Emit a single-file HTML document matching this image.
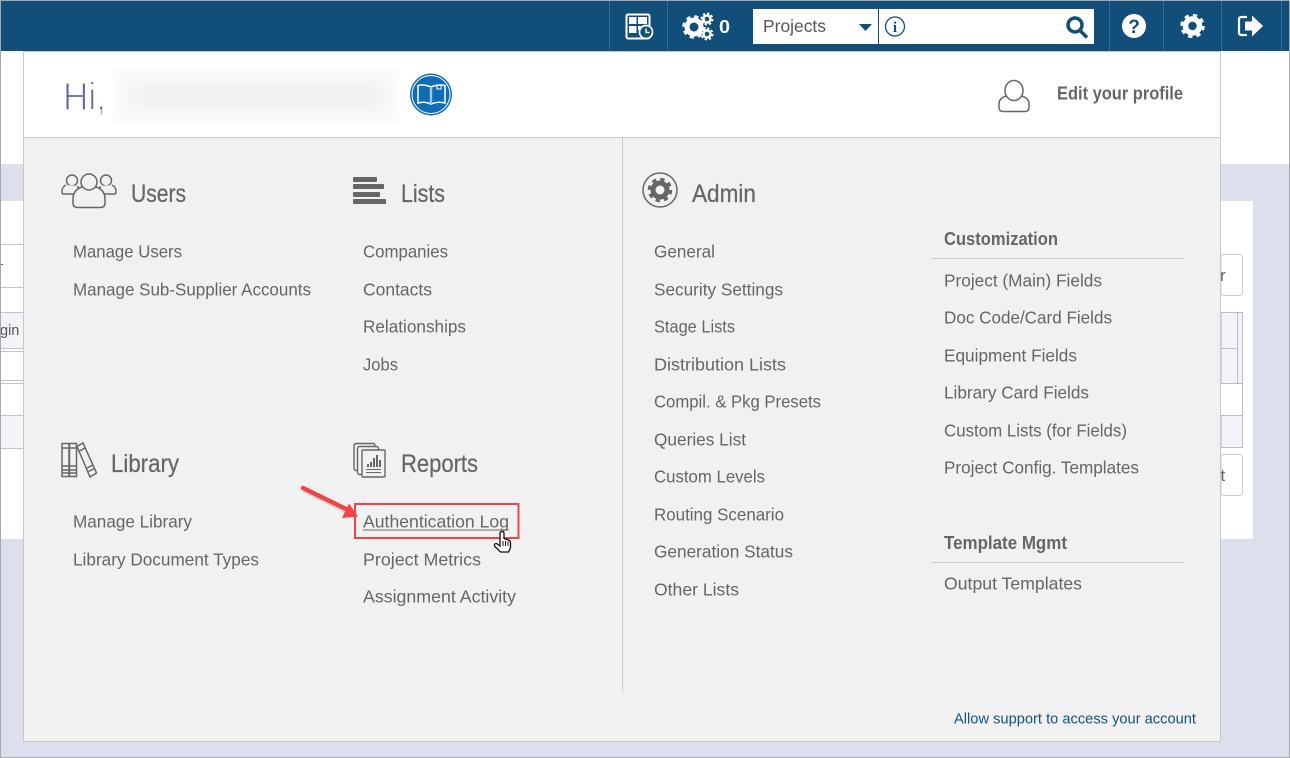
<!DOCTYPE html>
<html lang="en"><head><meta charset="utf-8"><title>Admin menu</title>
<style>
html,body{margin:0;padding:0;background:#dbe0ec}
svg{display:block;position:absolute;left:0;top:0}
text{font-family:"Liberation Sans",Arial,sans-serif;fill:#666}
.i{font-size:17.500px}
.h{font-size:25px;stroke:#666;stroke-width:.25px}
.b{font-size:18px;font-weight:bold}
</style></head><body>
<svg width="1290" height="758" viewBox="0 0 1290 758" xmlns="http://www.w3.org/2000/svg">
<!-- background page -->
<rect width="1290" height="758" fill="#dbe0ec"/>
<rect y="51" width="1290" height="113" fill="#fff"/>
<rect y="201" width="1253" height="338" fill="#fff"/>
<!-- left table fragments -->
<g fill="none" stroke="#c4c4ca" stroke-width="1">
<path d="M0 244.500H23M0 287.500H23M0 312.500H23M0 348.500H23M0 351.500H23M0 380.500H23M0 383.500H23M0 415.500H23M0 448.500H23"/>
</g>
<rect y="313" width="23" height="35" fill="#f1f3f9"/>
<rect y="416" width="23" height="32" fill="#f1f3f9"/>
<rect x="1" y="264" width="2" height="1" fill="#666"/>
<text x="0" y="335" font-size="14.500" style="fill:#555">gin</text>
<!-- right fragments -->
<rect x="1221" y="254.500" width="21.500" height="41" rx="3" fill="#fff" stroke="#ccc"/>
<text x="1220" y="281" font-size="17" style="fill:#666">r</text>
<rect x="1221" y="312.500" width="21.500" height="135" fill="#f1f3f9" stroke="#bcbcc8"/>
<rect x="1221" y="383" width="21" height="32" fill="#fff"/>
<path d="M1221 348.500H1237.500M1237.500 313V383M1221 383.500H1242M1221 415.500H1242" stroke="#bcbcc8" fill="none"/>
<rect x="1221" y="454.500" width="21.500" height="41" rx="3" fill="#fff" stroke="#ccc"/>
<text x="1220.500" y="481" font-size="17" style="fill:#666">t</text>
<!-- nav -->
<rect width="1290" height="51" fill="#114e7a"/>
<rect width="1290" height="1" fill="#a8a8a8"/>
<g stroke="#356d94" stroke-width="1">
<path d="M609.500 1V51M667.500 1V51M1109.500 1V51M1163.500 1V51M1221.500 1V51M1281.500 1V51"/>
</g>
<!-- calendar clock icon -->
<g>
<rect x="626.500" y="14.500" width="23" height="24" rx="1.500" fill="none" stroke="#fff" stroke-width="2"/>
<rect x="629" y="17" width="7.500" height="7" fill="#fff"/><rect x="638" y="17" width="9" height="7" fill="#fff"/>
<rect x="629" y="26" width="7.500" height="7" fill="#fff"/><rect x="638" y="26" width="5" height="4" fill="#fff"/>
<circle cx="646" cy="32" r="6.500" fill="#114e7a" stroke="#fff" stroke-width="1.700"/>
<path d="M646 28.500V32.500H649.500" fill="none" stroke="#fff" stroke-width="1.400"/>
</g>
<!-- gears -->
<g fill="none" stroke="#fff">
<circle cx="694" cy="27" r="7" stroke-width="5"/>
<circle cx="694" cy="27" r="10" stroke-width="3.500" stroke-dasharray="4 3.850"/>
<circle cx="707" cy="19" r="3.500" stroke-width="2.500"/>
<circle cx="707" cy="19" r="5.500" stroke-width="2" stroke-dasharray="2.300 2"/>
<circle cx="707" cy="34" r="3.500" stroke-width="2.500"/>
<circle cx="707" cy="34" r="5.500" stroke-width="2" stroke-dasharray="2.300 2"/>
</g>
<text x="719" y="33" class="b" textLength="11" lengthAdjust="spacingAndGlyphs" style="fill:#fff">0</text>
<!-- search box -->
<rect x="753" y="9" width="341" height="35" fill="#fff"/>
<rect x="878" y="9" width="1" height="35" fill="#114e7a"/>
<text x="763" y="32" class="i" textLength="63" lengthAdjust="spacingAndGlyphs" style="fill:#555">Projects</text>
<path d="M859 24H872L865.500 31Z" fill="#114e7a"/>
<circle cx="895" cy="26.500" r="9.500" fill="none" stroke="#114e7a" stroke-width="1.300"/>
<text x="895" y="32" font-size="15" text-anchor="middle" font-weight="bold" style="font-family:'Liberation Serif',serif;fill:#114e7a">i</text>
<circle cx="1075" cy="25" r="7" fill="none" stroke="#114e7a" stroke-width="3.500"/>
<path d="M1080 30.500L1087 37.500" stroke="#114e7a" stroke-width="3.500" fill="none"/>
<!-- help -->
<circle cx="1134" cy="26" r="12" fill="#fff"/>
<text x="1134" y="33" font-size="19" font-weight="bold" text-anchor="middle" style="fill:#114e7a">?</text>
<!-- settings -->
<g fill="none" stroke="#fff">
<circle cx="1192.500" cy="26" r="7" stroke-width="5.500"/>
<circle cx="1192.500" cy="26" r="10.500" stroke-width="3.500" stroke-dasharray="4.200 4.050"/>
</g>
<!-- logout -->
<path d="M1247 17H1241.500Q1239 17 1239 19.500V32.500Q1239 35 1241.500 35H1247" fill="none" stroke="#fff" stroke-width="2.200"/>
<path d="M1245 21.500H1252V15.500L1263 26L1252 36.500V30.500H1245Z" fill="#fff"/>
<!-- panel -->
<rect x="23.500" y="51.500" width="1197" height="690" fill="#f1f1f1" stroke="#c8c8c8"/>
<rect x="24" y="51" width="1196" height="86" fill="#fff"/>
<rect x="24" y="137" width="1196" height="1" fill="#c9c9c9"/>
<rect x="622" y="138" width="1" height="553" fill="#c9c9c9"/>
<rect y="51" x="23" width="1198" height="1" fill="#c8c8c8"/>
<!-- hi -->
<text x="63" y="110" font-size="39" textLength="43" lengthAdjust="spacingAndGlyphs" style="fill:#5f63a0;stroke:#fff;stroke-width:1.300px;paint-order:normal">Hi,</text>
<defs>
<filter id="bl" x="-10%" y="-60%" width="120%" height="220%"><feGaussianBlur stdDeviation="9"/></filter>
<clipPath id="nm"><rect x="113" y="68" width="286" height="56"/></clipPath>
</defs>
<rect x="113" y="68" width="286" height="56" fill="#fbfbfb"/>
<g clip-path="url(#nm)"><rect x="128" y="85" width="258" height="22" fill="#eeeeee" filter="url(#bl)"/></g>
<!-- book badge -->
<circle cx="431" cy="94.500" r="21" fill="#0f6cb6"/>
<circle cx="431" cy="94.500" r="19" fill="none" stroke="#fff" stroke-width="1"/>
<path d="M418 85.500Q424 84 431 87Q438 84 445 85.500V103Q438 101 431 104Q424 101 418 103Z" fill="none" stroke="#fff" stroke-width="1.500"/>
<path d="M431 87V104" stroke="#9fc6e6" stroke-width="2.500"/>
<path d="M437 85H441V89H437Z" fill="none" stroke="#fff"/>
<!-- profile -->
<g fill="none" stroke="#666" stroke-width="1.500">
<ellipse cx="1014" cy="90.500" rx="9" ry="10"/>
<path d="M1006.500 96Q999 98 999 104V107Q999 111.500 1003 111.500H1025Q1029 111.500 1029 107V104Q1029 98 1021.500 96"/>
</g>
<text x="1057" y="99.500" class="b" textLength="126" lengthAdjust="spacingAndGlyphs">Edit your profile</text>
<!-- users icon -->
<g fill="#f1f1f1" stroke="#666" stroke-width="1.500">
<circle cx="72" cy="180.500" r="5.500"/>
<path d="M66 185Q62 187 62 191V192Q62 194 64 194H78V186"/>
<circle cx="106" cy="180.500" r="5.500"/>
<path d="M112 185Q116 187 116 191V192Q116 194 114 194H100V186"/>
<path d="M82 187Q73 190 73 199V203Q73 207.500 78 207.500H100Q105 207.500 105 203V199Q105 190 96 187Z"/>
<circle cx="89" cy="182" r="8"/>
</g>
<text x="131" y="202" class="h" textLength="55" lengthAdjust="spacingAndGlyphs">Users</text>
<!-- lists icon -->
<g fill="#666">
<rect x="353" y="177" width="24" height="5" rx="1"/><rect x="353" y="184" width="31" height="5" rx="1"/>
<rect x="353" y="192" width="27" height="5" rx="1"/><rect x="353" y="199" width="33" height="5" rx="1"/>
</g>
<text x="401" y="202" class="h" textLength="44" lengthAdjust="spacingAndGlyphs">Lists</text>
<!-- admin icon -->
<circle cx="660" cy="190" r="17" fill="none" stroke="#666" stroke-width="1.500"/>
<g fill="none" stroke="#666">
<circle cx="660" cy="190" r="7" stroke-width="5"/>
<circle cx="660" cy="190" r="10.500" stroke-width="3.500" stroke-dasharray="4.200 4.050"/>
</g>
<text x="692" y="202" class="h" textLength="64" lengthAdjust="spacingAndGlyphs">Admin</text>
<!-- library icon -->
<g fill="none" stroke="#666" stroke-width="1.500">
<rect x="62" y="443.500" width="7" height="33"/><rect x="69.500" y="443.500" width="7" height="33"/>
<path d="M62.500 448H76M62.500 466H76M62.500 470H76M62.500 473H76"/>
<path d="M77 446.500L83 443L96.500 473L90 477Z"/>
<path d="M79.500 451L85 448M87 468L93 465M88.500 471.500L94.500 468.500"/>
</g>
<text x="111" y="472" class="h" textLength="68" lengthAdjust="spacingAndGlyphs">Library</text>
<!-- reports icon -->
<g fill="#f1f1f1" stroke="#666" stroke-width="1.400">
<rect x="354" y="443.500" width="21" height="27" rx="2"/>
<rect x="357.500" y="446.500" width="21" height="28" rx="2"/>
<rect x="362" y="450" width="23" height="27" rx="1"/>
</g>
<g fill="#666">
<rect x="367" y="464" width="2" height="3"/><rect x="370" y="462" width="2" height="5"/><rect x="373" y="458" width="2" height="9"/><rect x="376" y="455" width="2" height="12"/><rect x="379" y="460" width="2" height="7"/>
<rect x="366" y="469" width="15" height="1"/><rect x="366" y="472" width="15" height="1"/>
</g>
<text x="401" y="472" class="h" textLength="77" lengthAdjust="spacingAndGlyphs">Reports</text>
<!-- column 1 -->
<g transform="translate(0 -.5)">
<text class="i" x="73" y="258" textLength="109" lengthAdjust="spacingAndGlyphs">Manage Users</text>
<text class="i" x="73" y="296" textLength="238" lengthAdjust="spacingAndGlyphs">Manage Sub-Supplier Accounts</text>
<text class="i" x="363" y="258" textLength="85" lengthAdjust="spacingAndGlyphs">Companies</text>
<text class="i" x="363" y="296" textLength="69" lengthAdjust="spacingAndGlyphs">Contacts</text>
<text class="i" x="363" y="333" textLength="103" lengthAdjust="spacingAndGlyphs">Relationships</text>
<text class="i" x="363" y="371" textLength="35" lengthAdjust="spacingAndGlyphs">Jobs</text>
<text class="i" x="73" y="528" textLength="119" lengthAdjust="spacingAndGlyphs">Manage Library</text>
<text class="i" x="73" y="566" textLength="186" lengthAdjust="spacingAndGlyphs">Library Document Types</text>
<text class="i" x="363" y="528" textLength="146" lengthAdjust="spacingAndGlyphs">Authentication Log</text>
<rect x="363" y="530" width="146" height="1" fill="#666"/>
<text class="i" x="363" y="566" textLength="118" lengthAdjust="spacingAndGlyphs">Project Metrics</text>
<text class="i" x="363" y="603" textLength="153" lengthAdjust="spacingAndGlyphs">Assignment Activity</text>
<!-- admin col -->
<text class="i" x="654" y="258" textLength="61" lengthAdjust="spacingAndGlyphs">General</text>
<text class="i" x="654" y="296" textLength="129" lengthAdjust="spacingAndGlyphs">Security Settings</text>
<text class="i" x="654" y="333" textLength="81" lengthAdjust="spacingAndGlyphs">Stage Lists</text>
<text class="i" x="654" y="371" textLength="132" lengthAdjust="spacingAndGlyphs">Distribution Lists</text>
<text class="i" x="654" y="408" textLength="167" lengthAdjust="spacingAndGlyphs">Compil. &amp; Pkg Presets</text>
<text class="i" x="654" y="446" textLength="92" lengthAdjust="spacingAndGlyphs">Queries List</text>
<text class="i" x="654" y="483" textLength="111" lengthAdjust="spacingAndGlyphs">Custom Levels</text>
<text class="i" x="654" y="521" textLength="130" lengthAdjust="spacingAndGlyphs">Routing Scenario</text>
<text class="i" x="654" y="558" textLength="139" lengthAdjust="spacingAndGlyphs">Generation Status</text>
<text class="i" x="654" y="596" textLength="85" lengthAdjust="spacingAndGlyphs">Other Lists</text>
<!-- customization -->
<text class="b" x="944" y="245.500" textLength="114" lengthAdjust="spacingAndGlyphs">Customization</text>
<text class="i" x="944" y="287" textLength="158" lengthAdjust="spacingAndGlyphs">Project (Main) Fields</text>
<text class="i" x="944" y="324" textLength="168" lengthAdjust="spacingAndGlyphs">Doc Code/Card Fields</text>
<text class="i" x="944" y="362" textLength="133" lengthAdjust="spacingAndGlyphs">Equipment Fields</text>
<text class="i" x="944" y="399" textLength="145" lengthAdjust="spacingAndGlyphs">Library Card Fields</text>
<text class="i" x="944" y="437" textLength="183" lengthAdjust="spacingAndGlyphs">Custom Lists (for Fields)</text>
<text class="i" x="944" y="474" textLength="195" lengthAdjust="spacingAndGlyphs">Project Config. Templates</text>
<text class="b" x="944" y="549.500" textLength="123" lengthAdjust="spacingAndGlyphs">Template Mgmt</text>
<text class="i" x="944" y="590" textLength="138" lengthAdjust="spacingAndGlyphs">Output Templates</text>
</g>
<rect x="931" y="258" width="253" height="1" fill="#c9c9c9"/>
<rect x="931" y="562" width="253" height="1" fill="#c9c9c9"/>
<text x="954" y="723.500" font-size="15" textLength="242" lengthAdjust="spacingAndGlyphs" style="fill:#14527f">Allow support to access your account</text>
<!-- annotation -->
<rect x="355" y="504" width="163.500" height="34" fill="none" stroke="#f0444b" stroke-width="2"/>
<path d="M303 490L345 511" stroke="#777" stroke-width="4" opacity=".25"/>
<path d="M303 488L346 509" stroke="#f0444b" stroke-width="4.500" stroke-linecap="round"/>
<path d="M358 516.500L342 518L349 503.500Z" fill="#f0444b"/>
<!-- hand cursor -->
<path d="M500 543V533.500Q500 531.500 502 531.500Q504 531.500 504 533.500V538.500L508.500 540Q510.500 541 510.500 543V548L508.500 552H500.500L494.500 546Q494 543.500 496.500 543.500L500 546Z" fill="#fff" stroke="#111" stroke-width="1.300"/>
<path d="M503 541V546M505.500 541V546M508 541.500V546" stroke="#111"/>
<!-- screenshot frame -->
<rect x="0" y="0" width="1" height="758" fill="#a8a8a8"/>
<rect x="1289" y="0" width="1" height="758" fill="#a8a8a8"/>
<rect x="0" y="757" width="1290" height="1" fill="#a8a8a8"/>
</svg>
</body></html>
